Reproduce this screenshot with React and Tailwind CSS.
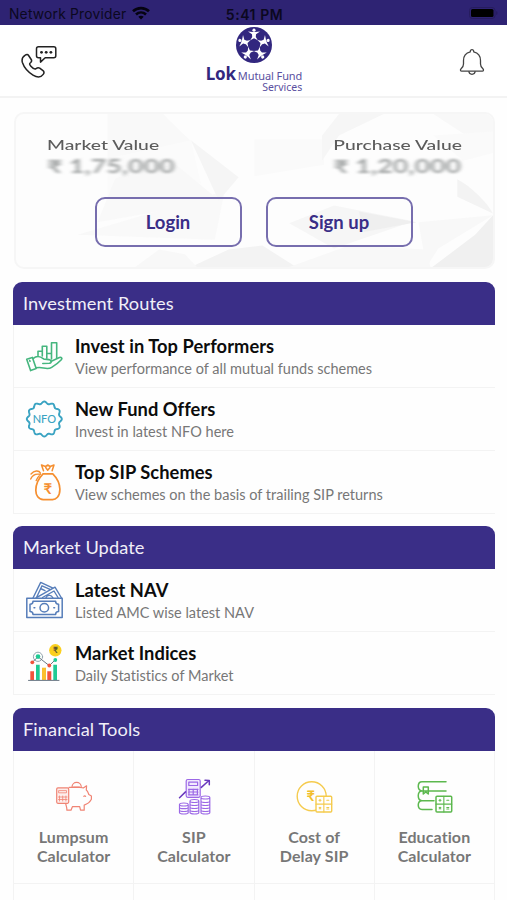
import React from "react";
import { clsx } from "clsx";

const scallop = () => {
  const points = [];
  for (let i = 0; i <= 180; i++) {
    const a = (i / 180) * Math.PI * 2;
    const r = 16.4 + 1.1 * Math.cos(12 * a);
    points.push(
      `${(19.3 + r * Math.sin(a)).toFixed(2)},${(20 - r * Math.cos(a)).toFixed(2)}`
    );
  }
  return points.join(" ");
};

const Icon = ({ children, color, width = 1.3 }) => (
  <svg
    viewBox="0 0 40 40"
    className="size-10 shrink-0"
    fill="none"
    stroke={color}
    strokeWidth={width}
    strokeLinecap="round"
    strokeLinejoin="round"
  >
    {children}
  </svg>
);

const Rupee = ({ x, y, size, color }) => (
  <text
    x={x}
    y={y}
    fontSize={size}
    fill={color}
    stroke="none"
    textAnchor="middle"
    fontWeight="700"
    className="font-['Lato','DejaVu_Sans',sans-serif]"
  >
    ₹
  </text>
);

const HandChartIcon = () => (
  <Icon color="#45b67e" width={1.6}>
    <path d="M13 19.5V15.2h4.3M17.3 20V10.2h4.5v12M21.8 17.5h4.7M26.5 23V6.7h5.2V22" />
    <path d="M1.7 23.2 7.4 21.4 11.2 32.5 5.6 34.6ZM4.7 24.5l.3.8" />
    <path d="M8 22.6c3-2.6 7-2.7 10.6.3 2.3.7 5 .2 6.8 1.2 1.8 1.2.7 3-1.2 3.2l-6.4.2M25.8 25.4l8.6-3.8c1.8-.8 3.4.6 1.9 2.2-3 3.2-6.3 5.6-9.6 7.6-2.5 1.5-5.5 1.2-8.2.6-2.5-.6-4.7-.7-7.4-.2" />
  </Icon>
);

const NfoIcon = () => (
  <Icon color="#3aa3c2" width={1.9}>
    <polygon points={scallop()} />
    <text
      x="19.4"
      y="23.7"
      fontSize="11"
      fill="#3aa3c2"
      stroke="none"
      textAnchor="middle"
      className="font-['Lato',sans-serif] font-medium"
    >
      NFO
    </text>
  </Icon>
);

const BagIcon = () => (
  <Icon color="#f58f30" width={1.7}>
    <path d="M18 11.8h9.8c3.4 3.4 7 8.5 7.1 15.5 0 7.6-4.2 10.3-7.4 10.3h-9.3c-4.700 0-7.400-4.200-7.400-9.300 0-6.500 3.300-12.500 7.200-16.500Z" />
    <path d="M18.5 8.8 16.5 3l4 1.5L22.8 3l2.3 1.5L29 3l-1.9 5.8M20.7 5.5l2 2.7 2.3-2.7" strokeWidth="1.5" />
    <path d="M15.500 11c-1.700-3-6.300-2.600-9.500 1M15.300 12.300c-4.500-.8-8.200 1.400-9.600 4.800M14.300 13.800c-1.400 1-2.200 2.600-3.100 4.800" strokeWidth="1.4" />
    <Rupee x={22.9} y={31.5} size={15} color="#f58f30" />
  </Icon>
);

const CashIcon = () => (
  <Icon color="#567db9" width={1.5}>
    <path
      d="M8 18 15.7 2.4 28 8.2M11.5 17.5 17 5.8l8 3.6M11 17.8 30 7.2l6.5 10.8M17.5 17.5 29 11l4 6.5M21 17.8c.8-2.400 5-4 6.800 0M15.500 8.500l4.500 2.200"
      strokeWidth="1.4"
    />
    <rect x="1.8" y="18.3" width="35.4" height="19.2" />
    <path d="M8 21.2h22.6c0 2 1 3 3 3v7.4c-2 0-3 1-3 3H8c0-2-1-3-3-3v-7.400c2 0 3-1 3-3Z" />
    <circle cx="19.3" cy="27.7" r="4.3" />
    <path d="M9 27.8h.8M28.8 27.8h.8" />
  </Icon>
);

const IndicesIcon = () => (
  <Icon color="#687683" width={1}>
    <path d="M5.3 28.3H9V37H5.3ZM22.3 28.3h4V37h-4Z" fill="#f2533c" stroke="none" />
    <path d="M11 21.7h3.7V37H11ZM28.3 21.7H32V37h-3.700Z" fill="#1fcb94" stroke="none" />
    <path d="M17 24.7h4V37h-4Z" fill="#fbc02d" stroke="none" />
    <path d="M3.5 37.4H34" />
    <circle cx="13" cy="13.8" r="4.6" stroke="#94a5ae" />
    <path d="m7.3 19.3 5.7-5.5 11.3 8.9 6-6" />
    <circle cx="7.3" cy="19.3" r="1.9" fill="#f2533c" stroke="none" />
    <circle cx="13" cy="13.6" r="2.3" fill="#1fcb94" stroke="none" />
    <circle cx="24.3" cy="22.5" r="1.9" fill="#f2533c" stroke="none" />
    <circle cx="30.3" cy="17" r="1.9" fill="#1fcb94" stroke="none" />
    <circle cx="30.3" cy="7.3" r="6.2" fill="#fbd01e" stroke="none" />
    <Rupee x={30.4} y={10.4} size={8.5} color="#5a5230" />
  </Icon>
);

const PiggyIcon = () => (
  <Icon color="#f08474" width={1.2}>
    <rect x="2.7" y="10.9" width="12" height="15.4" rx="1.2" fill="#fdeeec" />
    <path d="M5 13.6h7.5v2.2H5ZM5.5 19v5M8.7 19v5M11.9 19v5M4.5 20h8.5M4.5 22.5h8.5" strokeWidth=".8" />
    <path d="M15 10.3h10.5c1.7 0 2.6.4 3.8.7l3.3-2.2-.3 4.2c1.5 1.2 2 3.2 2.5 4.5l2.6 1.5v3.3c-1.4 2.7-3 4.5-7.2 5.8v5.1h-3.700l-.8-3.500h-7.300l-1.400 3.500h-4.100c.3-2.500-.9-4.500-1.200-6.500" />
    <path d="M18 10.3c0-6.500 9.300-6.500 9.300 0M19.500 10.100h6" />
    <path d="M29.8 19.3c.5-.7 1.3-.7 1.8 0" />
  </Icon>
);

const SipIcon = () => (
  <Icon color="#9c68e6" width={1.2}>
    <rect x="12.2" y="2.5" width="14" height="17.8" rx="1.5" fill="#f1e9fd" />
    <path d="M14.8 5.2h8.8v3.3h-8.8ZM15 12v6M19.2 12v6M23.4 12v6M14.5 12.3h9.5M14.5 15h9.5M14.5 17.8h9.5" />
    <path d="m5.5 20.7 6-5.8M27.3 10.4l7.4-6.6M31 3.2l4.3.2v4.3" stroke="#6939bd" strokeWidth="1.5" />
    <path d="M5.5 27.5c0-2 8.7-2 8.7 0v8c0 2-8.7 2-8.7 0ZM5.5 27.5c0 2 8.7 2 8.7 0M5.5 30.2c0 2 8.7 2 8.7 0M5.5 33c0 2 8.7 2 8.7 0" />
    <path d="M16 24c0-2 8.8-2 8.8 0v11.5c0 2-8.8 2-8.8 0ZM16 24c0 2 8.8 2 8.8 0M16 27c0 2 8.8 2 8.8 0M16 30c0 2 8.8 2 8.8 0M16 33c0 2 8.8 2 8.8 0" />
    <path d="M27 20.5c0-2 8.8-2 8.8 0v15c0 2-8.8 2-8.8 0ZM27 20.5c0 2 8.8 2 8.8 0M27 24c0 2 8.8 2 8.8 0M27 27c0 2 8.8 2 8.8 0M27 30c0 2 8.8 2 8.8 0M27 33c0 2 8.8 2 8.8 0" />
  </Icon>
);

const CalcGrid = () => (
  <>
    <rect x="22" y="19.3" width="15.7" height="15.7" rx="1" fill="#fff" />
    <path
      d="M29.85 19.3V35M22 27.15h15.7M25 23.2h2M26 22.2v2M32.8 23.2h2M25.2 30.3l1.6 1.6M26.8 30.3l-1.6 1.6M32.8 30.5h2M32.8 32h2"
      strokeWidth="1.1"
    />
  </>
);

const DelayIcon = () => (
  <Icon color="#f5cb4e" width={1.4}>
    <circle cx="17.7" cy="19.3" r="14.5" />
    <Rupee x={16.7} y={24} size={14.5} color="#f2be2c" />
    <CalcGrid />
  </Icon>
);

const EducationIcon = () => (
  <Icon color="#5cb84e" width={1.5}>
    <path d="M32 4.7H8c-5 0-5 9.3 0 9.3h24M8 14c-5 0-5 9.7 0 9.7h12M8 23.7c-5 0-5 8.8 0 8.8h10M9.3 10h5v7l-2.5-2-2.5 2Z" />
    <CalcGrid />
  </Icon>
);

const PhoneChatIcon = () => (
  <svg viewBox="0 0 36 34" className="h-[34px] w-9" fill="none" stroke="#222" strokeWidth="1.5" strokeLinejoin="round">
    <path d="M17.5 1.8h15.3q2 0 2 2v7q0 2-2 2h-8.6l-4.7 4.3v-4.3h-2q-2 0-2-2v-7q0-2 2-2Z" />
    <path d="M4.2 10.2c1.4-1 2.5-1 3.4.3l2.6 4c.8 1.3.4 2.2-.5 3-1.6 1.2-1.3 2 .2 3.8 1.7 2 3.2 3.3 5 2.5 1.5-1.3 2.5-1.5 3.8-.6l3.3 2.5c1.500 1.200 1.300 2.200.2 3.700-2.300 3.200-5.800 3.500-10.200.7C7.200 27.100 3 22.200 1.400 17.500c-.9-3.200.3-5.700 2.800-7.300Z" />
    <g fill="#222" stroke="none">
      <circle cx="20.5" cy="7.3" r="1.4" />
      <circle cx="25.2" cy="7.3" r="1.4" />
      <circle cx="29.9" cy="7.3" r="1.4" />
    </g>
  </svg>
);

const BellIcon = () => (
  <svg viewBox="0 0 26 28" className="h-7 w-[26px]" fill="none" stroke="#444" strokeWidth="1.3" strokeLinejoin="round">
    <path d="M11.3 3.8c-.3-3 3.7-3 3.4 0 4.3 1 6.8 4.2 6.8 8.7v3.5c0 2.3.7 3.3 2.4 4.8 1 1 .6 2.4-.6 2.4H2.7c-1.300 0-1.700-1.400-.6-2.400C3.800 19.300 4.500 18.300 4.500 16v-3.500c0-4.500 2.500-7.700 6.800-8.700Z" />
    <path d="M9.8 23.3c.4 4 6 4 6.4 0" />
  </svg>
);

const LogoMark = () => (
  <svg viewBox="-18 -18 36 36" className="size-9">
    <circle r="18" fill="#32277f" />
    {[0, 72, 144, 216, 288].map((angle) => (
      <g key={angle} transform={`rotate(${angle})`}>
        <circle cy="-14.8" r="1.6" fill="#fff" />
        <path d="M-6-13.5-1.5-13h3L6-13.5 2-10.8 1.8-8 3.8-4.8 0-6.8-3.8-4.8-1.8-8-2-10.8Z" fill="#fff" />
      </g>
    ))}
  </svg>
);

const StatusBar = () => (
  <div className="grid h-[25px] grid-cols-3 items-center bg-[#2e2373] pt-[3px] pr-[9px] pl-[9px] font-['Inter',sans-serif] text-[13.8px] text-[#0b0820]">
    <div className="flex items-center gap-1.5 whitespace-nowrap">
      <span className="tracking-[0.22px]">Network Provider</span>
      <svg viewBox="0 0 18 14" className="mb-0.5 h-3.5 w-[18px]" fill="none" stroke="#050310" strokeWidth="2.6">
        <path d="M1 5.3c4.5-4.3 11.500-4.300 16 0M4 8.500c2.900-2.700 7.100-2.700 10 0" />
        <path d="M9 13.5 6.3 10.8c1.5-1.3 3.9-1.3 5.4 0Z" fill="#050310" stroke="none" />
      </svg>
    </div>
    <span className="pl-0.5 text-center text-[14px] font-semibold tracking-[0.55px]">5:41 PM</span>
    <svg viewBox="0 0 29 12" className="mb-0.5 h-3 w-[29px] justify-self-end">
      <rect x=".5" y=".5" width="25.5" height="11" rx="3" fill="none" stroke="#261c5e" />
      <rect x="2" y="2" width="22.5" height="8" rx="1.5" fill="#000" />
      <path d="M27.2 4v4q1.3-.7 1.3-2t-1.3-2Z" fill="#261c5e" />
    </svg>
  </div>
);

const Header = () => (
  <header className="flex h-[73px] items-start justify-between border-b-2 border-[#f3f3f3] bg-white pr-[22px] pl-[21px]">
    <div className="w-12 pt-5">
      <PhoneChatIcon />
    </div>
    <div className="flex flex-col items-center pt-0.5 pl-0.5 text-[#32277f]">
      <LogoMark />
      <div className="flex h-[19px] items-baseline gap-0.5 font-['Noto_Sans',sans-serif]">
        <span className="text-[17px] leading-[21px] font-bold tracking-[-0.2px]">Lok</span>
        <span className="text-[11px] leading-[9px] tracking-[-0.1px] text-[#5a50a0]">Mutual Fund</span>
      </div>
      <span className="self-end font-['Noto_Sans',sans-serif] text-[10.5px] leading-[10px] text-[#5a50a0]">
        Services
      </span>
    </div>
    <div className="flex w-12 justify-end pt-[23px]">
      <BellIcon />
    </div>
  </header>
);

const CardBackdrop = () => (
  <svg viewBox="0 0 480 157" className="absolute inset-0 size-full" preserveAspectRatio="none">
    <path d="M92 0h56l28 28-84 18Z" fill="#f9f9f9" />
    <path d="M92 46 176 27l10 44-94 20Z" fill="#fbfbfb" />
    <path d="m100 66 60-15 45 38-123 22Z" fill="#f8f8f8" />
    <path d="m62 124 148-45-10 50Z" fill="#f8f8f8" />
    <path d="m176 27 48 38-20 24Z" fill="#f5f5f5" />
    <path d="m176 157 38-18 34-4 34 22Z" fill="#f3f3f3" />
    <path d="m120 157 24-18 26 5 12 13Z" fill="#f8f8f8" />
    <path d="M240 26h70v26l-70 12Z" fill="#fafafa" />
    <path d="m325 0 45 0-45 22-17 26V22Z" fill="#f6f6f6" />
    <path d="m420 0 60 40V0Z" fill="#f8f8f8" />
    <path d="m420 22 60-4v22l-30 8Z" fill="#fafafa" />
    <path d="m275 112 45-18 80 16-80 28Z" fill="#f4f4f4" />
    <path d="m345 100 58 11-53 10Z" fill="#ececec" />
    <path d="M444 67c15 8 30 24 36 35l-36-17Z" fill="#f3f3f3" />
    <path d="m405 111 75-7-55 34-12 19Z" fill="#f8f8f8" />
    <path d="m480 104-18 20-43 33h61Z" fill="#f0f0f0" />
    <path d="m275 157 60-22 78 4 4 18Z" fill="#f8f8f8" />
  </svg>
);

const AuthButton = ({ label }) => (
  <button className="h-[50px] w-[147px] rounded-[10px] border-2 border-[#776eae] bg-white/20 pt-px text-[18.5px] font-bold text-[#3a2e87]">
    {label}
  </button>
);

const Holding = ({ label, amount, className }) => (
  <div className={clsx("flex flex-col items-start whitespace-nowrap", className)}>
    <span className="text-[13.5px] leading-[18px] font-medium text-[#5c5c5c]">{label}</span>
    <span className="mt-px origin-left scale-x-[1.04] text-[18px] leading-[22px] font-bold text-[#a0a3a3] blur-[1.3px]">
      {amount}
    </span>
  </div>
);

const PortfolioCard = () => (
  <section className="relative mt-3.5 mr-3 ml-3.5 h-[157px] overflow-hidden rounded-[10px] border-2 border-[#f6f6f6] bg-[#fdfdfd]">
    <CardBackdrop />
    <div className="relative flex justify-between pt-[22px] pr-[31px] pl-[31px]">
      <Holding label="Market Value" amount="₹ 1,75,000" className="origin-left scale-x-[1.43]" />
      <Holding label="Purchase Value" amount="₹ 1,20,000" className="origin-right scale-x-[1.43]" />
    </div>
    <div className="relative mt-5 flex justify-center gap-6 pr-0.5">
      <AuthButton label="Login" />
      <AuthButton label="Sign up" />
    </div>
  </section>
);

const Section = ({ title, className, children }) => (
  <section className={clsx("mr-3 ml-[13px]", className)}>
    <h2 className="flex h-[43px] items-center rounded-t-[9px] bg-[#3a2e87] px-2.5 pt-px text-[18.2px] tracking-[0.1px] text-[#f1eff8]">
      {title}
    </h2>
    {children}
  </section>
);

const MenuRow = ({ icon: RowIcon, title, subtitle }) => (
  <li className="flex h-[63px] items-center gap-2.5 border-b border-l border-[#f3f3f3] pl-[11px]">
    <RowIcon />
    <div className="flex flex-col pt-px whitespace-nowrap">
      <span className="text-[18.3px] leading-6 font-bold tracking-[0.06px] text-[#0c0c0c]">{title}</span>
      <span className="text-[14.5px] leading-[22px] tracking-[0.01px] text-[#777]">{subtitle}</span>
    </div>
  </li>
);

const routes = [
  {
    icon: HandChartIcon,
    title: "Invest in Top Performers",
    subtitle: "View performance of all mutual funds schemes",
  },
  { icon: NfoIcon, title: "New Fund Offers", subtitle: "Invest in latest NFO here" },
  {
    icon: BagIcon,
    title: "Top SIP Schemes",
    subtitle: "View schemes on the basis of trailing SIP returns",
  },
];

const updates = [
  { icon: CashIcon, title: "Latest NAV", subtitle: "Listed AMC wise latest NAV" },
  { icon: IndicesIcon, title: "Market Indices", subtitle: "Daily Statistics of Market" },
];

const tools = [
  { icon: PiggyIcon, lines: ["Lumpsum", "Calculator"] },
  { icon: SipIcon, lines: ["SIP", "Calculator"] },
  { icon: DelayIcon, lines: ["Cost of", "Delay SIP"] },
  { icon: EducationIcon, lines: ["Education", "Calculator"] },
];

const App = () => {
  return (
    <div className="h-[900px] w-full overflow-hidden bg-[#fefefe] font-['Lato','DejaVu_Sans',sans-serif]">
      <StatusBar />
      <Header />
      <PortfolioCard />

      <Section title="Investment Routes" className="mt-[13px]">
        <ul>
          {routes.map((item) => (
            <MenuRow key={item.title} {...item} />
          ))}
        </ul>
      </Section>

      <Section title="Market Update" className="mt-3">
        <ul>
          {updates.map((item) => (
            <MenuRow key={item.title} {...item} />
          ))}
        </ul>
      </Section>

      <Section title="Financial Tools" className="mt-[13px]">
        <div className="grid grid-cols-4 border-l border-[#f3f3f3]">
          {tools.map(({ icon: ToolIcon, lines }) => (
            <div
              key={lines.join(" ")}
              className="flex h-[133px] flex-col items-center border-r border-b border-[#f3f3f3] pt-[26px]"
            >
              <ToolIcon />
              <p className="mt-[11px] text-center text-[16px] leading-[18.5px] font-bold tracking-[0.1px] text-[#777]">
                {lines[0]}
                <br />
                {lines[1]}
              </p>
            </div>
          ))}
          {tools.map(({ lines }) => (
            <div key={lines.join("-")} className="h-[17px] border-r border-[#f3f3f3]" />
          ))}
        </div>
      </Section>
    </div>
  );
};

export default App;
